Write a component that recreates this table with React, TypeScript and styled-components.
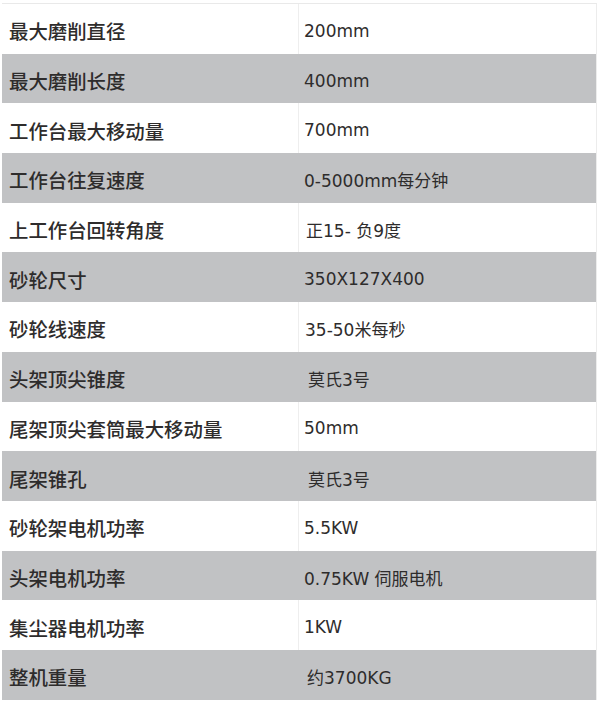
import styled, { createGlobalStyle } from "styled-components";

const GlobalStyle = createGlobalStyle`
  html, body {
    margin: 0;
    padding: 0;
    background: #ffffff;
  }
`;

const specs: { name: string; value: string; indent?: number }[] = [
  { name: "最大磨削直径", value: "200mm" },
  { name: "最大磨削长度", value: "400mm" },
  { name: "工作台最大移动量", value: "700mm" },
  { name: "工作台往复速度", value: "0-5000mm每分钟" },
  { name: "上工作台回转角度", value: "正15- 负9度", indent: 2 },
  { name: "砂轮尺寸", value: "350X127X400" },
  { name: "砂轮线速度", value: "35-50米每秒", indent: 1 },
  { name: "头架顶尖锥度", value: "莫氏3号", indent: 4 },
  { name: "尾架顶尖套筒最大移动量", value: "50mm" },
  { name: "尾架锥孔", value: "莫氏3号", indent: 4 },
  { name: "砂轮架电机功率", value: "5.5KW" },
  { name: "头架电机功率", value: "0.75KW 伺服电机" },
  { name: "集尘器电机功率", value: "1KW" },
  { name: "整机重量", value: "约3700KG", indent: 3 },
];

const Table = styled.div`
  margin: 3px 4px 0 2px;
  width: 595px;
  border-top: 1px solid #e9e9e9;
  border-right: 1px solid #ececec;
  box-sizing: border-box;
  font-family: "DejaVu Sans", "Noto Sans CJK SC", sans-serif;
  color: #333333;
`;

const Row = styled.div<{ $shaded: boolean }>`
  display: grid;
  grid-template-columns: 296px 1fr;
  height: 49.7px;
  background: ${(p) => (p.$shaded ? "#c1c2c4" : "#ffffff")};
`;

const NameCell = styled.div`
  display: flex;
  align-items: center;
  padding: 4px 0 0 7px;
  font-family: "Noto Sans CJK SC", sans-serif;
  font-size: 19.4px;
  font-weight: 500;
  color: #2e2c2c;
`;

const ValueCell = styled.div<{ $shaded: boolean; $indent: number }>`
  display: flex;
  align-items: center;
  padding: 4px 0 0 ${(p) => 5 + p.$indent}px;
  border-left: 1px solid ${(p) => (p.$shaded ? "transparent" : "#eeeeee")};
  font-size: 17px;
  color: #2e2c2c;
`;

export default function App() {
  return (
    <>
      <GlobalStyle />
      <Table>
        {specs.map((s, i) => {
          const shaded = i % 2 === 1;
          return (
            <Row key={s.name} $shaded={shaded}>
              <NameCell>{s.name}</NameCell>
              <ValueCell $shaded={shaded} $indent={s.indent ?? 0}>
                {s.value}
              </ValueCell>
            </Row>
          );
        })}
      </Table>
    </>
  );
}
